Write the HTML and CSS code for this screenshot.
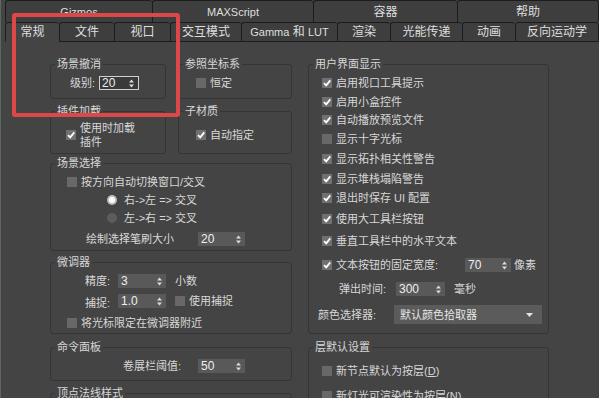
FILE: index.html
```html
<!DOCTYPE html>
<html lang="zh-CN">
<head>
  <meta charset="UTF-8" />
  <title>首选项设置 - 常规</title>
  <link rel="stylesheet" href="styles.css">
</head>
<body>
  <div class="window">
    <!-- 选项卡 -->
    <div class="tabs">
      <div class="tab-row back">
        <div class="tab lat t-gizmos">Gizmos</div>
        <div class="tab lat t-maxscript">MAXScript</div>
        <div class="tab t-container">容器</div>
        <div class="tab t-help">帮助</div>
      </div>
      <div class="tab-row front">
        <div class="tab active t-general">常规</div>
        <div class="tab t-file">文件</div>
        <div class="tab t-view">视口</div>
        <div class="tab t-interact">交互模式</div>
        <div class="tab t-gamma"><span class="lat">Gamma</span>&nbsp;和&nbsp;<span class="lat">LUT</span></div>
        <div class="tab t-render">渲染</div>
        <div class="tab t-radio">光能传递</div>
        <div class="tab t-anim">动画</div>
        <div class="tab t-ik">反向运动学</div>
      </div>
    </div>

    <!-- 内容 -->
    <div class="content">
      <div class="col col-left">
        <div class="pair pair-top">
          <section class="group g-small">
            <div class="group-title">场景撤消</div>
            <div class="row undo-row">
              <span class="lbl lbl-level">级别:</span>
              <span class="spin spin-focus w40"><span>20</span><svg class="arr" width="5" height="9" viewBox="0 0 5 9"><path d="M0 3.6 2.5 0.6 5 3.6Z M0 5.4 5 5.4 2.5 8.4Z" fill="#dcdcdc"/></svg></span>
            </div>
          </section>
          <section class="group g-small g-narrow">
            <div class="group-title">参照坐标系</div>
            <div class="row ref-row"><span class="cb"></span>恒定</div>
          </section>
        </div>

        <div class="pair pair-mid">
          <section class="group g-small">
            <div class="group-title">插件加载</div>
            <div class="row plug-row"><span class="cb on"><svg width="10" height="10" viewBox="0 0 10 10"><path d="M2 5.2 4.2 7.4 8.3 2.4" fill="none" stroke="#fff" stroke-width="1.8"/></svg></span><span class="two-line">使用时加载<br>插件</span></div>
          </section>
          <section class="group g-small g-narrow">
            <div class="group-title">子材质</div>
            <div class="row mat-row"><span class="cb on"><svg width="10" height="10" viewBox="0 0 10 10"><path d="M2 5.2 4.2 7.4 8.3 2.4" fill="none" stroke="#fff" stroke-width="1.8"/></svg></span>自动指定</div>
          </section>
        </div>

        <section class="group g-select">
          <div class="group-title">场景选择</div>
          <div class="row sel-check"><span class="cb"></span><span>按方向自动切换窗口/交叉</span></div>
          <div class="row sel-radio"><span class="radio on"></span>右-&gt;左 =&gt; 交叉</div>
          <div class="row sel-radio"><span class="radio"></span>左-&gt;右 =&gt; 交叉</div>
          <div class="row sel-brush">
            <span class="lbl lbl-brush">绘制选择笔刷大小</span>
            <span class="spin w47"><span>20</span><svg class="arr" width="5" height="9" viewBox="0 0 5 9"><path d="M0 3.6 2.5 0.6 5 3.6Z M0 5.4 5 5.4 2.5 8.4Z" fill="#dcdcdc"/></svg></span>
          </div>
        </section>

        <section class="group g-spinner">
          <div class="group-title">微调器</div>
          <div class="row spin-row1">
            <span class="lbl lbl-spin">精度:</span>
            <span class="spin w48"><span>3</span><svg class="arr" width="5" height="9" viewBox="0 0 5 9"><path d="M0 3.6 2.5 0.6 5 3.6Z M0 5.4 5 5.4 2.5 8.4Z" fill="#dcdcdc"/></svg></span>
            <span class="after">小数</span>
          </div>
          <div class="row spin-row2">
            <span class="lbl lbl-spin lbl-low">捕捉:</span>
            <span class="spin w48"><span>1.0</span><svg class="arr" width="5" height="9" viewBox="0 0 5 9"><path d="M0 3.6 2.5 0.6 5 3.6Z M0 5.4 5 5.4 2.5 8.4Z" fill="#dcdcdc"/></svg></span>
            <span class="cb after-cb"></span>使用捕捉
          </div>
          <div class="row spin-row3"><span class="cb"></span>将光标限定在微调器附近</div>
        </section>

        <section class="group g-cmd">
          <div class="group-title">命令面板</div>
          <div class="row cmd-row">
            <span class="lbl lbl-cmd">卷展栏阈值:</span>
            <span class="spin w47"><span>50</span><svg class="arr" width="5" height="9" viewBox="0 0 5 9"><path d="M0 3.6 2.5 0.6 5 3.6Z M0 5.4 5 5.4 2.5 8.4Z" fill="#dcdcdc"/></svg></span>
          </div>
        </section>

        <section class="group g-normal">
          <div class="group-title">顶点法线样式</div>
        </section>
      </div>

      <div class="col col-right">
        <section class="group g-ui">
          <div class="group-title">用户界面显示</div>
          <div class="row ui-row m5"><span class="cb on"><svg width="10" height="10" viewBox="0 0 10 10"><path d="M2 5.2 4.2 7.4 8.3 2.4" fill="none" stroke="#fff" stroke-width="1.8"/></svg></span>启用视口工具提示</div>
          <div class="row ui-row m5"><span class="cb on"><svg width="10" height="10" viewBox="0 0 10 10"><path d="M2 5.2 4.2 7.4 8.3 2.4" fill="none" stroke="#fff" stroke-width="1.8"/></svg></span>启用小盒控件</div>
          <div class="row ui-row m4"><span class="cb on"><svg width="10" height="10" viewBox="0 0 10 10"><path d="M2 5.2 4.2 7.4 8.3 2.4" fill="none" stroke="#fff" stroke-width="1.8"/></svg></span>自动播放预览文件</div>
          <div class="row ui-row m5"><span class="cb"></span>显示十字光标</div>
          <div class="row ui-row m6"><span class="cb on"><svg width="10" height="10" viewBox="0 0 10 10"><path d="M2 5.2 4.2 7.4 8.3 2.4" fill="none" stroke="#fff" stroke-width="1.8"/></svg></span>显示拓扑相关性警告</div>
          <div class="row ui-row m6"><span class="cb on"><svg width="10" height="10" viewBox="0 0 10 10"><path d="M2 5.2 4.2 7.4 8.3 2.4" fill="none" stroke="#fff" stroke-width="1.8"/></svg></span>显示堆栈塌陷警告</div>
          <div class="row ui-row m5"><span class="cb on"><svg width="10" height="10" viewBox="0 0 10 10"><path d="M2 5.2 4.2 7.4 8.3 2.4" fill="none" stroke="#fff" stroke-width="1.8"/></svg></span>退出时保存&nbsp;<span class="lat">UI</span>&nbsp;配置</div>
          <div class="row ui-row m7"><span class="cb on"><svg width="10" height="10" viewBox="0 0 10 10"><path d="M2 5.2 4.2 7.4 8.3 2.4" fill="none" stroke="#fff" stroke-width="1.8"/></svg></span>使用大工具栏按钮</div>
          <div class="row ui-row m8"><span class="cb on"><svg width="10" height="10" viewBox="0 0 10 10"><path d="M2 5.2 4.2 7.4 8.3 2.4" fill="none" stroke="#fff" stroke-width="1.8"/></svg></span>垂直工具栏中的水平文本</div>
          <div class="row ui-row m10">
            <span class="cb on"><svg width="10" height="10" viewBox="0 0 10 10"><path d="M2 5.2 4.2 7.4 8.3 2.4" fill="none" stroke="#fff" stroke-width="1.8"/></svg></span>
            <span class="lbl lbl-width">文本按钮的固定宽度:</span>
            <span class="spin w46"><span>70</span><svg class="arr" width="5" height="9" viewBox="0 0 5 9"><path d="M0 3.6 2.5 0.6 5 3.6Z M0 5.4 5 5.4 2.5 8.4Z" fill="#dcdcdc"/></svg></span>
            <span class="unit">像素</span>
          </div>
          <div class="row popup-row">
            <span class="lbl lbl-popup">弹出时间:</span>
            <span class="spin w49"><span>300</span><svg class="arr" width="5" height="9" viewBox="0 0 5 9"><path d="M0 3.6 2.5 0.6 5 3.6Z M0 5.4 5 5.4 2.5 8.4Z" fill="#dcdcdc"/></svg></span>
            <span class="after">毫秒</span>
          </div>
          <div class="row color-row">
            <span class="lbl lbl-color">颜色选择器:</span>
            <span class="combo"><span>默认颜色拾取器</span><svg width="7" height="4" viewBox="0 0 7 4"><path d="M0 0 7 0 3.5 4Z" fill="#e6e6e6"/></svg></span>
          </div>
        </section>

        <section class="group g-layer">
          <div class="group-title">层默认设置</div>
          <div class="row ui-row m10"><span class="cb"></span>新节点默认为按层(<u class="lat">D</u>)</div>
          <div class="row ui-row m11"><span class="cb"></span>新灯光可渲染性为按层(<u class="lat">N</u>)</div>
        </section>
      </div>
    </div>

    <!-- 标注框 -->
    <div class="callout"></div>
  </div>
</body>
</html>
```

FILE: styles.css
```css
* { margin: 0; padding: 0; box-sizing: border-box; }
html, body { width: 100%; height: 100%; background: #444; overflow: hidden; }
body {
  font-family: "Liberation Sans", "Noto Sans CJK SC", sans-serif;
  font-size: 11px; line-height: 14px; color: #d8d8d8;
}
.lat { font-family: "Liberation Sans", sans-serif; }

.window {
  position: relative;
  width: 599px; height: 398px; overflow: hidden;
  box-shadow: inset 1px 0 #5d685c;
}

/* 选项卡 */
.tabs { height: 42px; padding-left: 5px; }
.tab-row { display: flex; }
.tab-row.back { height: 22px; }
.tab-row.front { height: 20px; }
.tab {
  flex: none;
  display: flex; align-items: center; justify-content: center;
  background: #3e3e3e;
  border: 1px solid #1c1c1c; border-right: none;
  border-radius: 3px 3px 0 0;
  font-size: 12px; color: #dedede;
  white-space: nowrap;
}
.tab:last-child { border-right: 1px solid #1c1c1c; }
.tab.lat { font-size: 11px; }
.tab .lat { font-size: 11px; }
.back .tab { border-bottom: none; }
.front .tab { border-bottom: 1px solid #1c1c1c; }
.front .tab.active { background: #444; border-bottom-color: #444; }

.t-gizmos { width: 147px; }
.t-maxscript { width: 161px; }
.t-container { width: 144px; }
.t-help { width: 142px; }
.t-general { width: 54px; }
.t-file { width: 55px; }
.t-view { width: 56px; }
.t-interact { width: 71px; }
.t-gamma { width: 96px; }
.t-render { width: 53px; }
.t-radio { width: 72px; }
.t-anim { width: 53px; }
.t-ik { width: 84px; }

/* 内容 */
.content { display: flex; gap: 16px; padding-left: 50px; }
.col-left { width: 242px; flex: none; }
.col-right { width: 241px; flex: none; }
.pair { display: flex; gap: 12px; }
.pair-top { margin-top: 22px; }
.pair-mid { margin-top: 12px; }

.group { border: 1px solid #353535; border-radius: 3px; }
.group-title {
  width: fit-content;
  margin: -8px 0 0 4px; padding: 0 2px;
  background: #444; color: #d8d8d8;
}
.g-small { width: 116px; }
.g-small.g-narrow { width: 114px; }
.pair-top .group { height: 35px; }
.pair-mid .group { height: 43px; }
.g-select { margin-top: 9px; height: 88px; }
.g-spinner { margin-top: 11px; height: 72px; }
.g-cmd { margin-top: 13px; height: 34px; }
.g-normal { margin-top: 12px; height: 40px; }
.g-ui { margin-top: 22px; height: 270px; }
.g-layer { margin-top: 13px; height: 70px; }

/* 行 */
.row { display: flex; align-items: center; height: 14px; white-space: nowrap; }
.lbl { flex: none; }

.undo-row { margin-top: 5px; padding-left: 19px; }
.lbl-level { width: 29px; }
.ref-row { margin-top: 5px; padding-left: 17px; }
.plug-row { margin-top: 3px; padding-left: 15px; height: 28px; }
.mat-row { margin-top: 10px; padding-left: 17px; }

.sel-check { margin-top: 5px; padding-left: 16px; }
.sel-radio { margin-top: 4px; padding-left: 56px; }
.sel-brush { margin-top: 7px; padding-left: 35px; }
.lbl-brush { width: 112px; }

.spin-row1 { margin-top: 5px; padding-left: 34px; }
.spin-row2 { margin-top: 6px; padding-left: 34px; }
.spin-row3 { margin-top: 8px; padding-left: 16px; }
.lbl-spin { width: 33px; }
.lbl-low { position: relative; top: 2px; }
.after { margin-left: 9px; }
.after-cb { margin-left: 9px; }

.cmd-row { margin-top: 5px; padding-left: 72px; }
.lbl-cmd { width: 75px; }

.ui-row { padding-left: 13px; }
.m4 { margin-top: 4px; }
.m5 { margin-top: 5px; }
.m6 { margin-top: 6px; }
.m7 { margin-top: 7px; }
.m8 { margin-top: 8px; }
.m10 { margin-top: 10px; }
.m11 { margin-top: 11px; }
.lbl-width { width: 129px; }
.unit { margin-left: 3px; }
.popup-row { margin-top: 10px; padding-left: 30px; }
.lbl-popup { width: 57px; }
.color-row { margin-top: 9px; padding-left: 9px; height: 19px; }
.lbl-color { width: 76px; }

/* 控件 */
.cb {
  flex: none; display: flex;
  width: 10px; height: 10px; margin-right: 4px;
  background: #686868;
}
.cb.on { background: #707070; }
.radio {
  flex: none;
  width: 10px; height: 10px; margin-right: 7px;
  border-radius: 50%; background: #5c5c5c;
}
.radio.on { background: radial-gradient(circle, #fafafa 0 38%, #bcbcbc 52% 100%); }

.spin {
  flex: none;
  display: flex; align-items: center; justify-content: space-between;
  height: 14px; padding: 0 4px 0 3px;
  background: #595959; color: #eee;
  font-family: "Liberation Sans", sans-serif; font-size: 12px;
}
.spin-focus { background: #3a3a3a; border: 1px solid #d0d0d0; padding-left: 2px; }
.w40 { width: 40px; }
.w46 { width: 46px; }
.w47 { width: 47px; }
.w48 { width: 48px; }
.w49 { width: 49px; }

.combo {
  flex: none;
  display: flex; align-items: center; justify-content: space-between;
  width: 148px; height: 19px; padding: 0 9px 0 6px;
  background: #5b5b5b; color: #e6e6e6;
}

/* 红色标注框 */
.callout {
  position: absolute; left: 12px; top: 13px;
  width: 168px; height: 104px;
  border: 4px solid #dc4848; border-radius: 3px;
  pointer-events: none;
}
```
